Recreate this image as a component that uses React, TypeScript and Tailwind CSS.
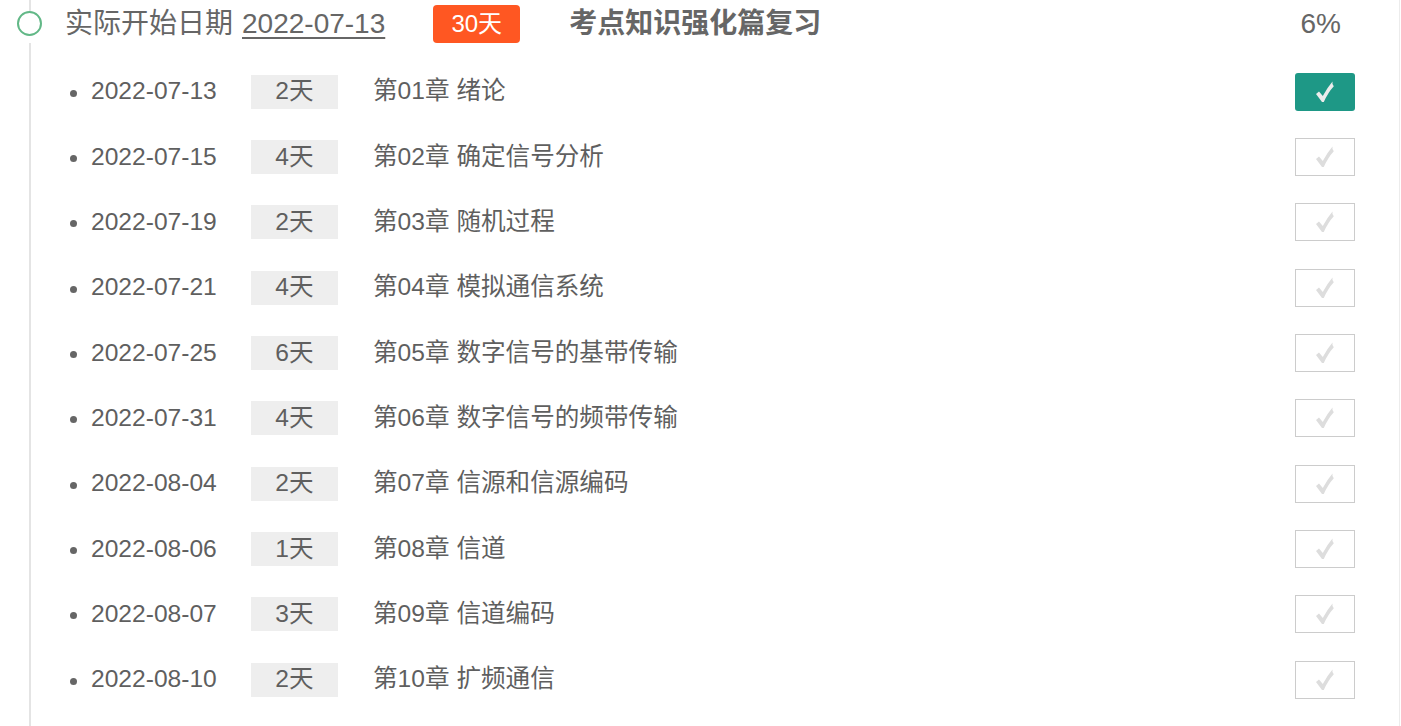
type Chapter = {
  date: string
  days: number
  title: string
  done: boolean
}

const chapters: Chapter[] = [
  { date: "2022-07-13", days: 2, title: "第01章 绪论", done: true },
  { date: "2022-07-15", days: 4, title: "第02章 确定信号分析", done: false },
  { date: "2022-07-19", days: 2, title: "第03章 随机过程", done: false },
  { date: "2022-07-21", days: 4, title: "第04章 模拟通信系统", done: false },
  { date: "2022-07-25", days: 6, title: "第05章 数字信号的基带传输", done: false },
  { date: "2022-07-31", days: 4, title: "第06章 数字信号的频带传输", done: false },
  { date: "2022-08-04", days: 2, title: "第07章 信源和信源编码", done: false },
  { date: "2022-08-06", days: 1, title: "第08章 信道", done: false },
  { date: "2022-08-07", days: 3, title: "第09章 信道编码", done: false },
  { date: "2022-08-10", days: 2, title: "第10章 扩频通信", done: false },
]

function Check({ color }: { color: string }) {
  return (
    <svg width="18" height="22" viewBox="0 0 18 22">
      <path
        d="M0 13 L3 10.5 L6.8 15 Q11 7 16.5 0.5 Q15.8 3.5 17.8 5.2 Q12 11.5 7.8 21 L6 21 Z"
        fill={color}
      />
    </svg>
  )
}

export default function App() {
  return (
    <div
      className="w-[1401px] h-[726px] overflow-hidden bg-white text-[#5f5f5f]"
      style={{ fontFamily: '"Liberation Sans", "Noto Sans CJK SC", sans-serif' }}
    >
      <div className="flex w-[1400px] h-full border-r border-[#ececec]">
        <div className="w-[59px] flex flex-col items-center shrink-0">
          <div className="w-[2px] h-[11px] bg-[#e4e4e4]" />
          <div className="w-[25px] h-[25px] rounded-full border-2 border-[#62b887]" />
          <div className="w-[2px] flex-1 mt-[7px] bg-[#e4e4e4]" />
        </div>

        <div className="flex-1 flex flex-col">
          <div className="h-[48px] flex items-center text-[28px] text-[#666]">
            <span className="ml-[6px]">实际开始日期 </span>
            <span className="ml-[9px] underline underline-offset-[4px] decoration-[1.5px]">2022-07-13</span>
            <span className="ml-[48px] w-[87px] h-[38px] rounded-[4px] bg-[#ff5722] text-white text-[24px] flex items-center justify-center">
              30天
            </span>
            <span className="ml-[49px] font-bold">考点知识强化篇复习</span>
            <span className="ml-auto mr-[58px]">6%</span>
          </div>

          <ul className="pt-[11px]">
            {chapters.map((c) => (
              <li key={c.date} className="h-[65.33px] flex items-center text-[24.6px]">
                <span className="ml-[11px] mt-[3px] w-[7px] h-[7px] rounded-full bg-[#666]" />
                <span className="ml-[14px] w-[160px]">{c.date}</span>
                <span className="w-[87px] h-[34px] bg-[#eeeeee] flex items-center justify-center">
                  {c.days}天
                </span>
                <span className="ml-[35px]">{c.title}</span>
                {c.done ? (
                  <span className="ml-auto mr-[44px] w-[60px] h-[38px] rounded-[3px] bg-[#1e9886] flex items-center justify-center">
                    <Check color="#ececec" />
                  </span>
                ) : (
                  <span className="ml-auto mr-[44px] w-[60px] h-[38px] border border-[#cccccc] flex items-center justify-center">
                    <Check color="#dddddd" />
                  </span>
                )}
              </li>
            ))}
          </ul>
        </div>
      </div>
    </div>
  )
}
